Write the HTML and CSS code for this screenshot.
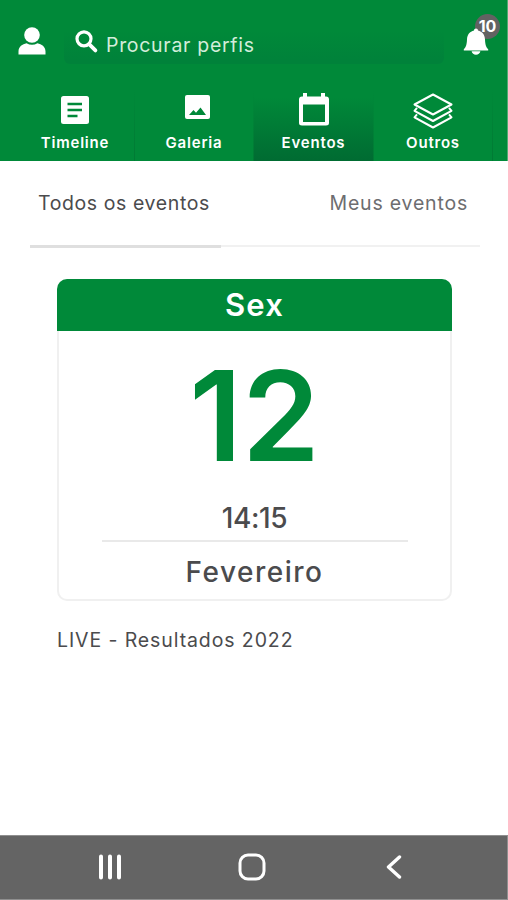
FILE: index.html
```html
<!DOCTYPE html>
<html lang="pt-BR">

<head>
  <meta charset="UTF-8">
  <meta name="viewport" content="width=device-width, initial-scale=1.0">
  <title>Eventos</title>
  <link rel="stylesheet" href="styles.css">
</head>

<body>
  <header>
    <div class="top">
      <svg class="user" width="28" height="28" viewBox="0 0 28 28" fill="#fff">
        <circle cx="14" cy="8" r="7.8"/>
        <path d="M0.5 27.5v-3C0.5 19.5 4.5 17 8.5 16.2Q14 19.5 19.5 16.2C23.5 17 27.5 19.5 27.5 24.5v3z"/>
      </svg>
      <div class="search">
        <svg width="24" height="24" viewBox="0 0 24 24" fill="none" stroke="#fff" stroke-linecap="round">
          <circle cx="9" cy="8.8" r="7" stroke-width="3.2"/>
          <path d="M14.6 14.6l5.8 5.8" stroke-width="3.8"/>
        </svg>
        <span class="placeholder">Procurar perfis</span>
      </div>
      <div class="bell">
        <span class="badge"><b>10</b></span>
        <svg width="26" height="28" viewBox="0 0 26 28" fill="#fff">
          <path d="M13 0.5c1.2 0 2 .8 2 2 4.3 1 6.8 4.3 7 9 .2 5.5 1.2 8 3.2 9.8v1.2H0.8v-1.2C2.8 19.5 3.8 17 4 11.5c.2-4.7 2.7-8 7-9 0-1.2.8-2 2-2z"/>
          <path d="M8.6 23.3h8.8c-.5 2.3-2.2 3.4-4.4 3.4s-3.900-1.100-4.400-3.400z"/>
        </svg>
      </div>
    </div>
    <nav>
      <a class="item timeline">
        <svg width="28" height="28" viewBox="0 0 28 28">
          <rect width="28" height="28" rx="2.5" fill="#fff"/>
          <path d="M6.5 8h14.5M6.5 14h14.5M6.5 20h10" stroke="#008939" stroke-width="2.6"/>
        </svg>
        <span>Timeline</span>
      </a>
      <a class="item galeria">
        <svg width="26" height="24" viewBox="0 0 26 24">
          <rect width="25" height="24" rx="2" fill="#fff"/>
          <path d="M4 20l4.500-5 2.500 2.800 4.500-5.300 5.500 7.500z" fill="#008939"/>
        </svg>
        <span>Galeria</span>
      </a>
      <a class="item eventos active">
        <svg width="30" height="33" viewBox="0 0 30 33">
          <path fill="#fff" fill-rule="evenodd" d="M4 0h4v3.500h14V0h4v3.500h1q3 0 3 3V30q0 2.500-3 2.500H3Q0 32.500 0 30V6.500q0-3 3-3h1zM4 11.500v17.500h22V11.500z"/>
        </svg>
        <span>Eventos</span>
      </a>
      <a class="item outros">
        <svg width="40" height="36" viewBox="0 0 40 36" fill="none" stroke="#fff" stroke-width="2" stroke-linejoin="round">
          <path d="M20 1.500L38.500 11.500 20 21.500 1.500 11.500z"/>
          <path d="M4 14.800l-2.500 3L20 28l18.500-10.200-2.500-3"/>
          <path d="M4 21.300l-2.500 3L20 34.500l18.500-10.200-2.500-3"/>
        </svg>
        <span>Outros</span>
      </a>
    </nav>
  </header>

  <div class="tabs">
    <a class="tab todos">Todos os eventos</a>
    <a class="tab meus">Meus eventos</a>
  </div>

  <main>
    <div class="card">
      <div class="weekday"><span>Sex</span></div>
      <div class="day"><span>12</span></div>
      <div class="hour"><span>14:15</span></div>
      <div class="month"><span>Fevereiro</span></div>
    </div>
    <p class="title"><span>LIVE - Resultados 2022</span></p>
  </main>

  <footer>
    <svg width="24" height="26" viewBox="0 0 24 26" stroke="#fff" stroke-width="4" stroke-linecap="round">
      <path d="M3 2.500v21M12 2.500v21M21 2.500v21"/>
    </svg>
    <svg class="home" width="28" height="28" viewBox="0 0 28 28" fill="none" stroke="#fff" stroke-width="3">
      <rect x="2" y="2" width="24" height="24" rx="8"/>
    </svg>
    <svg width="16" height="24" viewBox="0 0 16 24" fill="none" stroke="#fff" stroke-width="3.400" stroke-linecap="round" stroke-linejoin="round">
      <path d="M13.500 2L2.500 12l11 10"/>
    </svg>
  </footer>
</body>

</html>
```

FILE: styles.css
```css
* {
  padding: 0;
  margin: 0;
  box-sizing: border-box;
}
body {
  display: flex;
  flex-direction: column;
  height: 900px;
  overflow: hidden;
  background: #fff;
  font-family: Inter, "Open Sans", sans-serif;
  color: #4b4b4d;
}
svg {
  display: block;
  flex: none;
}
header {
  height: 161px;
  background: #008939;
  color: #fff;
  border-right: 1px solid #4faa73;
}

/* top bar */
.top {
  display: flex;
  height: 90px;
  padding: 22px 0 0 18px;
}
.user {
  margin-top: 5px;
}
.search {
  display: flex;
  width: 380px;
  height: 42px;
  margin-left: 18px;
  padding: 8px 0 0 11px;
  border-radius: 6px;
  background: linear-gradient(#008939 20%, #00823a 90%);
}
.placeholder {
  margin-left: 7px;
  line-height: 30px;
  font-size: 19.5px;
  letter-spacing: 0.7px;
  color: #d3edda;
  white-space: nowrap;
}
.bell {
  position: relative;
  margin: 6px 0 0 19px;
}
.bell svg {
  position: relative;
}
.badge {
  position: absolute;
  left: 12px;
  top: -14px;
  width: 25px;
  height: 25px;
  border-radius: 50%;
  background: #626262;
  text-align: center;
  line-height: 25px;
  font-size: 16px;
}

/* menu */
nav {
  display: flex;
  height: 71px;
  padding-left: 16px;
}
.item {
  display: flex;
  flex-direction: column;
  justify-content: space-between;
  align-items: center;
  width: 119px;
  height: 71px;
  padding-bottom: 8px;
  border-right: 1px solid;
  border-image: linear-gradient(#008939, #007a34) 1;
}
.item span {
  line-height: 20px;
  font-size: 15px;
  font-weight: 600;
  letter-spacing: 0.8px;
}
.timeline {
  padding-top: 6px;
}
.galeria {
  padding-top: 5px;
}
.galeria svg {
  margin-left: 7px;
}
.eventos {
  padding-top: 3px;
}
.outros {
  padding-top: 3px;
}
.active {
  width: 120px;
  background: linear-gradient(#008939 10%, #006b32);
}

/* tabs */
.tabs {
  display: flex;
  justify-content: space-between;
  width: 450px;
  height: 86px;
  margin-left: 30px;
  border-bottom: 2px solid #f1f1f1;
}
.tab {
  height: 88px;
  padding-top: 26px;
  line-height: 32px;
  font-size: 19.5px;
  letter-spacing: 0.6px;
  white-space: nowrap;
}
.todos {
  width: 191px;
  height: 87px;
  padding-left: 8px;
  border-bottom: 3px solid #dfdfdf;
}
.meus {
  padding-right: 12px;
  letter-spacing: 0.8px;
  color: #6d6d70;
}

/* event */
main {
  flex: 1;
  padding: 32px 0 0 57px;
}
.card {
  width: 395px;
  height: 322px;
  border: 2px solid #f0f0f0;
  border-top: none;
  border-radius: 10px;
  text-align: center;
}
.weekday {
  height: 52px;
  margin: 0 -2px;
  border-radius: 10px 10px 0 0;
  background: #008939;
  color: #fff;
  line-height: 52px;
  font-size: 31px;
  font-weight: 600;
  letter-spacing: 1.2px;
}
.day {
  height: 171px;
  line-height: 169px;
  font-size: 125px;
  font-weight: 600;
  color: #008939;
}
.hour {
  width: 306px;
  height: 40px;
  margin: 0 auto;
  border-bottom: 2px solid #e9e9e9;
  line-height: 33px;
  font-size: 28px;
  font-weight: 500;
  letter-spacing: -0.4px;
}
.month {
  line-height: 61px;
  font-size: 28px;
  font-weight: 500;
  letter-spacing: 1.5px;
}
.title {
  margin-top: 23px;
  line-height: 32px;
  font-size: 19.5px;
  letter-spacing: 0.9px;
}

/* phone buttons */
footer {
  display: flex;
  align-items: center;
  justify-content: space-between;
  height: 65px;
  padding: 0 105px 2px 98px;
  border: 1px solid #8f8f8f;
  border-left: none;
  background: #646464;
}
.home {
  margin-right: 5px;
}
```
